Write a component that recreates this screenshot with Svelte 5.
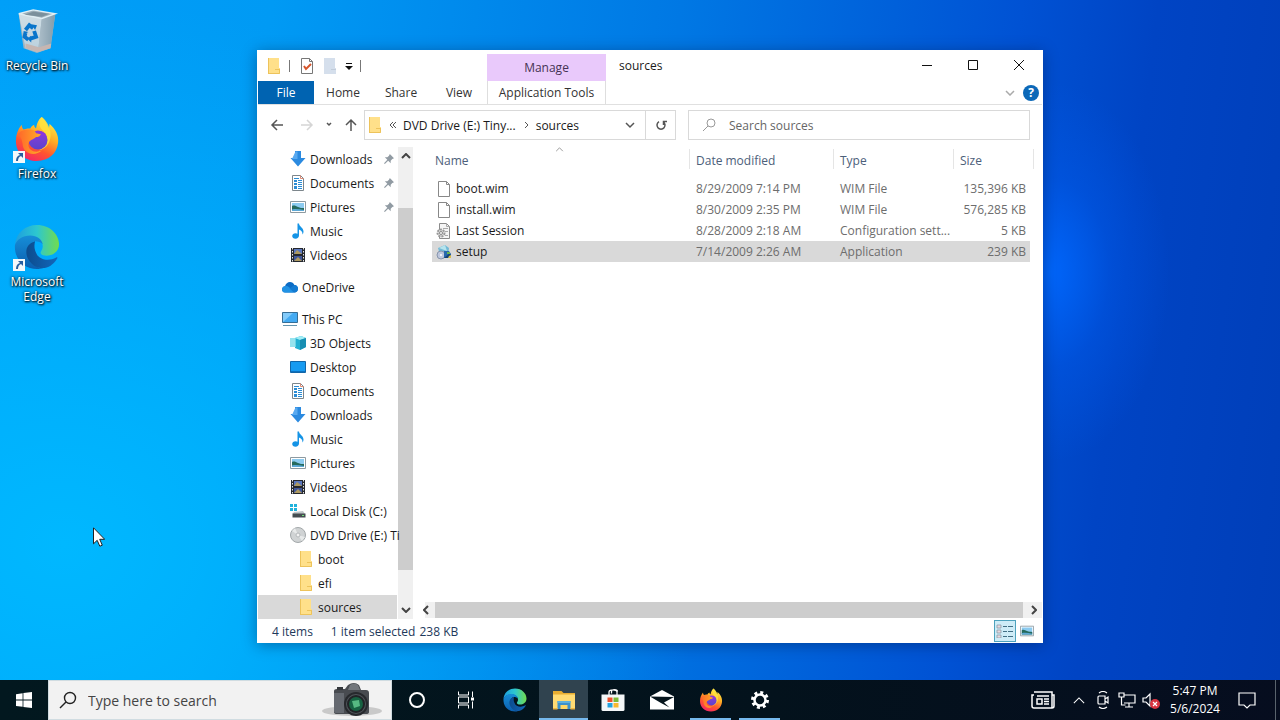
<script lang="ts">
	type Place = { name: string; icon: string; level: number; pinned?: boolean; gap?: boolean };

	const places: Place[] = [
		{ name: 'Downloads', icon: 'down', level: 2, pinned: true },
		{ name: 'Documents', icon: 'doc', level: 2, pinned: true },
		{ name: 'Pictures', icon: 'picture', level: 2, pinned: true },
		{ name: 'Music', icon: 'music', level: 2 },
		{ name: 'Videos', icon: 'video', level: 2 },
		{ name: 'OneDrive', icon: 'cloud', level: 1, gap: true },
		{ name: 'This PC', icon: 'pc', level: 1, gap: true },
		{ name: '3D Objects', icon: 'cube', level: 2 },
		{ name: 'Desktop', icon: 'desktop', level: 2 },
		{ name: 'Documents', icon: 'doc', level: 2 },
		{ name: 'Downloads', icon: 'down', level: 2 },
		{ name: 'Music', icon: 'music', level: 2 },
		{ name: 'Pictures', icon: 'picture', level: 2 },
		{ name: 'Videos', icon: 'video', level: 2 },
		{ name: 'Local Disk (C:)', icon: 'disk', level: 2 },
		{ name: 'DVD Drive (E:) Ti', icon: 'dvd', level: 2 },
		{ name: 'boot', icon: 'folder', level: 3 },
		{ name: 'efi', icon: 'folder', level: 3 },
		{ name: 'sources', icon: 'folder', level: 3 }
	];

	const files = [
		{ name: 'boot.wim', date: '8/29/2009 7:14 PM', type: 'WIM File', size: '135,396 KB', icon: 'file' },
		{ name: 'install.wim', date: '8/30/2009 2:35 PM', type: 'WIM File', size: '576,285 KB', icon: 'file' },
		{ name: 'Last Session', date: '8/28/2009 2:18 AM', type: 'Configuration sett...', size: '5 KB', icon: 'config' },
		{ name: 'setup', date: '7/14/2009 2:26 AM', type: 'Application', size: '239 KB', icon: 'setup' }
	];

	const shortcuts = [
		{ name: 'Recycle Bin', icon: 'bin', link: false },
		{ name: 'Firefox', icon: 'firefox', link: true },
		{ name: 'Microsoft Edge', icon: 'edge', link: true }
	];

	const apps = [
		{ name: 'Cortana', icon: 'cortana', state: '' },
		{ name: 'Task View', icon: 'taskview', state: '' },
		{ name: 'Microsoft Edge', icon: 'edge', state: '' },
		{ name: 'File Explorer', icon: 'explorer', state: 'active' },
		{ name: 'Microsoft Store', icon: 'store', state: '' },
		{ name: 'Mail', icon: 'mail', state: '' },
		{ name: 'Firefox', icon: 'firefox', state: 'running' },
		{ name: 'Settings', icon: 'settings', state: 'running' }
	];

	let current = $state('sources');
	let selected = $state('setup');
	let query = $state('');
	let search = $state('');
</script>

{#snippet small(icon: string)}
	<svg class="small" viewBox="0 0 16 16" aria-hidden="true">
		{#if icon === 'down'}
			<path d="M5 0h6v7h4.500L8 15.500.5 7H5z" fill="#2b8ae0" />
			<path d="M5.500.5h2V8H2z" fill="#58a9f0" />
		{:else if icon === 'doc'}
			<path d="M2.500.5h8l3 3v12h-11z" fill="#fff" stroke="#7d868c" />
			<path d="M10.500.5v3h3" fill="none" stroke="#d98b77" />
			<path d="M4 5h3v2H4zm0 3h3v2H4zm0 3h3v3H4zM4 3h5v1H4zM8 5h4v1H8zm0 2h4v1H8zm0 2h4v1H8zm0 2h4v1H8zm0 2h4v1H8z" fill="#2b8cd4" />
		{:else if icon === 'picture'}
			<path d="M.5 2.500h15v11H.5z" fill="#fff" stroke="#8d9aa1" />
			<path d="M2 4h12v8H2z" fill="#8ccbf0" />
			<path d="M2 7c2-1 4 0 6 1s4 1 6 1v3H2z" fill="#256a5d" />
			<path d="M2 10.500c4-1 8 0 12 .5v1H2z" fill="#5ca8d5" />
		{:else if icon === 'music'}
			<path d="M7.500.5H9c0 3 4.500 4 4.500 8 0 2-1 3-1 3 .2-3-1.500-4-3.500-5v6c0 2-1.500 3.200-3.500 3.200S2.200 14.500 2.200 13 3.700 10.300 5.500 10.300c.8 0 1.500.2 2 .5z" fill="#1594e6" />
		{:else if icon === 'video'}
			<path d="M1 1h14v14H1z" fill="#25282e" />
			<path d="M4 2h8v5H4z" fill="#5a77be" />
			<path d="M4 9h8v5H4z" fill="#405699" />
			<path d="m4 7 3-4 5 4zm0 7 4-4 4 4z" fill="#ad9960" />
			<path d="M2.500 1v14M13.500 1v14" stroke="#e6e6e6" stroke-dasharray="1.500 1.500" />
		{:else if icon === 'cloud'}
			<path d="M3.500 13.500C1.500 13.500 0 12.200 0 10.400 0 8.600 1.300 7.300 3 7.200 3.700 4.700 5.600 3 8 3c2 0 3.600 1 4.400 2.900C14.600 6 16 7.600 16 9.700c0 2.200-1.600 3.800-3.800 3.800z" fill="#0c6cc5" />
			<path d="M3 7.200c2.500-.5 4 .2 9 6.300H3.500A3.300 3.300 0 0 1 0 10.400a3.300 3.300 0 0 1 3-3.200z" fill="#2192e4" />
			<path d="M7.500 9.500 12.400 6C15 6 16 8 16 9.700c0 2.200-1.600 3.800-3.800 3.800z" fill="#137bd2" />
		{:else if icon === 'pc'}
			<path d="M.5 1.500h15v10H.5z" fill="#43aaf2" stroke="#356d95" />
			<path d="M1 2h10L1 11z" fill="#83cbfa" />
			<path d="M1 14.500h14" stroke="#6494ad" />
		{:else if icon === 'cube'}
			<path d="m5 3 6-2 5 2v9l-6 3-5-2z" fill="#22b0d2" />
			<path d="m5 3 6-2 5 2-6 2z" fill="#a2edf5" /><path d="m10 5 6-2v9l-6 3z" fill="#178eb2" />
			<path d="M0 3h6v9H0z" fill="#7adcea" opacity=".8" />
		{:else if icon === 'desktop'}
			<path d="M.5 2.500h15v11H.5z" fill="#179bf1" stroke="#1266a8" /><path d="M1 12.500h14" stroke="#0b71bf" />
		{:else if icon === 'disk'}
			<path d="M0 1h3v3H0zm4 0h3v3H4zM0 5h3v3H0zm4 0h3v3H4z" fill="#20b2dc" />
			<path d="m4 9 9-1 2 3H2.500z" fill="#bfc5c8" /><path d="M2.500 10.500h13v4h-13z" fill="#454d51" />
			<path d="M12 12.500h2" stroke="#72df77" />
		{:else if icon === 'dvd'}
			<circle cx="8" cy="8" r="7.500" fill="#d0d3d4" stroke="#a2a7a9" />
			<path d="m8 8-6-4 3-3zm0 0 7 2-3 4z" fill="#e8eaea" /><circle cx="8" cy="8" r="2" fill="#f3f3f3" stroke="#b5b9bb" />
		{:else if icon === 'folder'}
			<path d="M2 0h11v10h1v6H2z" fill="#ffe08a" />
			<path d="M2.500 0v16M9 11.500h5M13.500 11v4.500H3" stroke="#edc35b" fill="none" />
		{:else if icon === 'file'}
			<path d="M2.500.5h8l3 3v12h-11z" fill="#fff" stroke="#888" /><path d="M10.500.5v3h3" fill="none" stroke="#888" />
		{:else if icon === 'config'}
			<path d="M3.500.5h7l3 3v12h-10z" fill="#f5f5f5" stroke="#8b8b8b" /><path d="M10.500.5v3h3M7 5.500h5M9 8.500h3M9 12.500h3" fill="none" stroke="#aaa" />
			<circle cx="5" cy="10" r="3.500" fill="#ddd" stroke="#999" stroke-width="2" stroke-dasharray="2 1" /><circle cx="5" cy="10" r="1.500" fill="#fff" stroke="#888" />
		{:else if icon === 'setup'}
			<path d="M2 4 9 1l4 3-1 8-7 2z" fill="#72b9d6" /><path d="M3 4 9 1l2 6z" fill="#b6e4ed" />
			<circle cx="5" cy="11" r="4" fill="#bec7dd" stroke="#8795ac" /><circle cx="5" cy="11" r="1" fill="#fff" />
			<path d="M8 7h5l2 3v4H8z" fill="#2869ad" /><path d="m8 14 6-5 1 5z" fill="#164276" /><path d="M11 8h3v2h-3z" fill="#69b451" /><path d="m13 12 2-1v3h-3z" fill="#d8bd4c" />
		{/if}
	</svg>
{/snippet}

{#snippet large(icon: string)}
	<svg class="large" viewBox="0 0 48 48" aria-hidden="true">
		{#if icon === 'edge'}
			<path d="M1 22C2 9 12 1 24 1c14 0 23 10 23 20 0 8-7 12-13 12-5 0-7-2-6-4s2-3 2-6c0-6-6-10-13-10S3 17 1 22z" fill="url(#edge-top)" />
			<path d="M1 22c2-6 8-10 16-10 7 0 12 4 13 9-2-2-5-3-8-3-7 1-9 9-6 16s8 12 14 12c-2 1-4 1-6 1C11 47 0 37 1 22z" fill="url(#edge-left)" />
			<path d="M22 18c-8 2-11 9-8 17 3 7 10 12 18 11 6-1 11-6 13-10 1-1 0-2-1-1-7 4-18 3-21-5-2-4-2-8-1-12z" fill="url(#edge-low)" />
		{:else if icon === 'firefox'}
			<path d="M29 1c4 4 6 8 7 12 1-2 1-4 1-5 6 5 10 12 9 20-1 11-10 19-22 19C11 47 2 38 2 26 2 19 4 14 8 9c0 2 1 4 2 5 3-1 6-1 7-1 1-2 2-3 4-4 0 2 1 3 2 4 1-5 2-9 6-12z" fill="url(#fox-body)" />
			<path d="M29 1c6 5 8 10 9 16 1 9-3 17-12 19 9-5 10-15 5-20-3-3-7-6-2-15z" fill="#ffe43e" opacity=".8" />
			<circle cx="25" cy="25" r="10" fill="url(#fox-core)" />
			<path d="M4 19c3-4 7-5 13-5 3 0 5 1 6 4l5 1c0 2-3 3-5 3-3 3-8 3-8 8 0 6 7 9 14 6-8 7-20 3-20-7-1-4-1-7-5-10z" fill="url(#fox-head)" />
			<path d="M23 17c5-3 10 0 11 5-3-2-6-2-9 0l4-3z" fill="#8a38db" />
		{:else if icon === 'bin'}
			<path d="m5 7 38 0-5 35-14 5-14-5z" fill="#9eb5c1" />
			<path d="m5 6 24 5-4 35-13-4z" fill="url(#bin-face)" /><path d="m29 11 14-5-5 36-13 4z" fill="url(#bin-side)" />
			<path d="m5 6 15-4 23 4-14 5z" fill="#9caeb8" stroke="#e0eef4" stroke-width="1.500" />
			<path d="m11 7 9-3 17 2-8 3z" fill="#7b909c" />
			<path d="m12 37 14 4-1 5-13-4zm14 4 13-4-1 5-13 4z" fill="#c6b6b2" />
			<g fill="none" stroke="#0975cb" stroke-width="4"><path d="m12 23 4-5 4 3M21 24l2 6-6 2M15 33l-4-3 1-4" /></g>
			<path d="m18 17 6 1-2 5zm0 12v7l-4-4zm-8-5 5 1-5 3z" fill="#0975cb" />
		{:else if icon === 'cortana'}
			<circle cx="24" cy="24" r="14" fill="none" stroke="#fff" stroke-width="4" />
		{:else if icon === 'taskview'}
			<path d="M9 7v7h20V7M9 41v-7h20v7M9 18h20v12H9zM37 7v11M37 27v14" fill="none" stroke="#fff" stroke-width="2" /><path d="M34 19h6v6h-6z" fill="#fff" />
		{:else if icon === 'explorer'}
			<path d="M2 6h17l4 4h23v32H2z" fill="#e8ad31" /><path d="M2 13h44v29H2z" fill="#ffdb73" />
			<path d="M11 26h26v16H11z" fill="#3d91cb" /><path d="M17 34h14v8H17z" fill="#ffd765" /><path d="M11 26h26v4H11z" fill="#5eb1dd" /><path d="M2 40h9v3H2zm35 0h9v3h-9z" fill="#efb63f" />
		{:else if icon === 'store'}
			<path d="M16 15V8c0-6 16-6 16 0v7M21 11V7c0-5 12-5 12 0" fill="none" stroke="#fff" stroke-width="2.500" />
			<path d="M1 13h46v30q0 3-3 3H4q-3 0-3-3z" fill="#f4f7f8" />
			<path d="M13 19h10v9H13z" fill="#ef512d" /><path d="M25 19h10v9H25z" fill="#7cba38" /><path d="M13 30h10v9H13z" fill="#24a2df" /><path d="M25 30h10v9H25z" fill="#fab82f" />
		{:else if icon === 'mail'}
			<path d="M0 17 24 4l24 13v26H0z" fill="#fff" /><path d="m0 17 48 1-20 11 11 10-17-9z" fill="#06151d" />
		{:else if icon === 'settings'}
			<circle cx="24" cy="24" r="15" fill="none" stroke="#fff" stroke-width="6" stroke-dasharray="5.900 5.880" />
			<circle cx="24" cy="24" r="11" fill="none" stroke="#fff" stroke-width="5" />
		{/if}
	</svg>
{/snippet}

<svg class="defs" aria-hidden="true">
	<defs>
		<linearGradient id="edge-top"><stop stop-color="#1d9ee0" /><stop offset=".5" stop-color="#2dc7cf" /><stop offset="1" stop-color="#72dc4d" /></linearGradient>
		<linearGradient id="edge-left" x2="0" y2="1"><stop stop-color="#168ed8" /><stop offset="1" stop-color="#0b5eae" /></linearGradient>
		<linearGradient id="edge-low"><stop stop-color="#0c4c8e" /><stop offset="1" stop-color="#1267bb" /></linearGradient>
		<linearGradient id="fox-body" x1=".8" y1="0" x2=".3" y2="1"><stop stop-color="#fff44c" /><stop offset=".4" stop-color="#ffad25" /><stop offset=".7" stop-color="#ff552f" /><stop offset="1" stop-color="#f42568" /></linearGradient>
		<linearGradient id="fox-core" x2="0" y2="1"><stop stop-color="#8f3bd9" /><stop offset="1" stop-color="#5c43cc" /></linearGradient>
		<linearGradient id="fox-head"><stop stop-color="#ff672b" /><stop offset="1" stop-color="#ffae25" /></linearGradient>
		<linearGradient id="bin-face" x2="0" y2="1"><stop stop-color="#d1dee5" /><stop offset="1" stop-color="#b9d0dd" /></linearGradient>
		<linearGradient id="bin-side"><stop stop-color="#aebfca" /><stop offset="1" stop-color="#849dac" /></linearGradient>
	</defs>
</svg>

<div class="screen">
	<main class="desktop">
		<ul class="shortcuts">
			{#each shortcuts as item}
				<li>
					<button class="shortcut">
						<span class="picture">
							{@render large(item.icon)}
							{#if item.link}
								<svg class="arrow" viewBox="0 0 12 12" aria-hidden="true"><path d="M0 0h12v12H0z" fill="#f4f8fa" /><path d="M3 10q0-5 4-6L5 2h5v5L8 5q-3 1-3 5z" fill="#285fa0" /></svg>
							{/if}
						</span>
						<span>{item.name}</span>
					</button>
				</li>
			{/each}
		</ul>

		<section class="window" aria-label="sources">
			<header class="titlebar">
				<div class="quick">
					{@render small('folder')}
					<i></i>
					<button aria-label="Properties">
						<svg class="small" viewBox="0 0 16 16"><path d="M2.500.5h8l3 3v12h-11z" fill="#fff" stroke="#777" /><path d="M10.500.5v3h3" fill="none" stroke="#777" /><path d="m5 8 2 3 5-5" fill="none" stroke="#d6552b" stroke-width="2" /></svg>
					</button>
					<button aria-label="New folder">
						<svg class="small" viewBox="0 0 16 16"><path d="M2 0h11v10h1v6H2z" fill="#d5dfec" /><path d="M9 11.500h5" stroke="#c1ccda" /></svg>
					</button>
					<button aria-label="Customize Quick Access Toolbar">
						<svg class="tiny" viewBox="0 0 8 8"><path d="M1 1.500h6" stroke="#111" /><path d="M0 4h8L4 8z" fill="#111" /></svg>
					</button>
					<i></i>
				</div>
				<div class="manage">Manage</div>
				<h1>sources</h1>
				<div class="controls">
					<button aria-label="Minimize"><svg viewBox="0 0 10 10"><path d="M0 5.500h10" /></svg></button>
					<button aria-label="Maximize"><svg viewBox="0 0 10 10"><path d="M.5.5h9v9h-9z" /></svg></button>
					<button aria-label="Close"><svg viewBox="0 0 10 10"><path d="m0 0 10 10M10 0 0 10" /></svg></button>
				</div>
			</header>

			<nav class="ribbon" aria-label="Ribbon">
				<button class="file">File</button>
				<button>Home</button>
				<button>Share</button>
				<button>View</button>
				<button class="tools">Application Tools</button>
				<div class="help">
					<button aria-label="Expand the Ribbon"><svg viewBox="0 0 10 6"><path d="m1 1 4 4 4-4" fill="none" stroke="#aaa" stroke-width="1.500" /></svg></button>
					<button class="question" aria-label="Help">?</button>
				</div>
			</nav>

			<div class="address">
				<div class="history">
					<button aria-label="Back"><svg viewBox="0 0 14 14"><path d="M13 7H2M7 2 2 7l5 5" /></svg></button>
					<button aria-label="Forward" disabled><svg viewBox="0 0 14 14"><path d="M1 7h11M7 2l5 5-5 5" /></svg></button>
					<button class="recent" aria-label="Recent locations"><svg viewBox="0 0 8 14"><path d="m2 5 2 2 2-2" /></svg></button>
					<button aria-label="Up"><svg viewBox="0 0 14 14"><path d="M7 13V2M2 7l5-5 5 5" /></svg></button>
				</div>
				<div class="crumbs">
					{@render small('folder')}
					<svg class="chevrons" viewBox="0 0 8 8" aria-hidden="true"><path d="M4 1 1 4l3 3M7 1 4 4l3 3" /></svg>
					<a href="#drive">DVD Drive (E:) Tiny...</a>
					<svg class="chevrons" viewBox="0 0 8 8" aria-hidden="true"><path d="m3 1 3 3-3 3" /></svg>
					<a href="#sources">sources</a>
					<button class="previous" aria-label="Previous locations"><svg viewBox="0 0 10 8"><path d="m1 2 4 4 4-4" /></svg></button>
					<button class="refresh" aria-label="Refresh"><svg viewBox="0 0 12 12"><path d="M8 2.700A4 4 0 1 1 4 2.700M8.500 6V2.500H12" /></svg></button>
				</div>
				<label class="find">
					<svg viewBox="0 0 14 14" aria-hidden="true"><circle cx="9" cy="5" r="4" /><path d="m6 8-5 5" /></svg>
					<input type="text" placeholder="Search sources" aria-label="Search sources" bind:value={search} />
				</label>
			</div>

			<div class="body">
				<nav class="places" aria-label="Folders">
					{#each places as place}
						<button
							class="place level{place.level}"
							class:gap={place.gap}
							class:current={place.name === current}
							onclick={() => (current = place.name)}
						>
							{@render small(place.icon)}
							<span>{place.name}</span>
							{#if place.pinned}
								<svg class="pin" viewBox="0 0 12 12" aria-hidden="true"><path d="m7 0 5 5-2 1-2 2v3L5 8l-4 4-1-1 4-4-3-3h3l2-2z" fill="#919ba3" /></svg>
							{/if}
						</button>
					{/each}
				</nav>
				<div class="vscroll" aria-hidden="true">
					<svg viewBox="0 0 10 6"><path d="m1 5 4-4 4 4" /></svg>
					<div class="track"><div class="thumb"></div></div>
					<svg viewBox="0 0 10 6"><path d="m1 1 4 4 4-4" /></svg>
				</div>

				<div class="content">
					<table>
						<thead>
							<tr>
								<th class="name">Name<svg viewBox="0 0 10 6" aria-hidden="true"><path d="m1 5 4-4 4 4" /></svg></th>
								<th class="date">Date modified</th>
								<th class="type">Type</th>
								<th class="size">Size</th>
							</tr>
						</thead>
						<tbody>
							{#each files as file}
								<tr class:selected={file.name === selected} onclick={() => (selected = file.name)}>
									<td><span class="entry">{@render small(file.icon)}{file.name}</span></td>
									<td>{file.date}</td>
									<td>{file.type}</td>
									<td>{file.size}</td>
								</tr>
							{/each}
						</tbody>
					</table>
					<div class="hscroll" aria-hidden="true">
						<svg viewBox="0 0 6 10"><path d="M5 1 1 5l4 4" /></svg>
						<div class="thumb"></div>
						<svg viewBox="0 0 6 10"><path d="m1 1 4 4-4 4" /></svg>
					</div>
				</div>
			</div>

			<footer class="status">
				<span class="count">4 items</span>
				<span>1 item selected</span>
				<span>238 KB</span>
				<div class="views">
					<button class="on" aria-label="Details">
						<svg viewBox="0 0 18 14"><path d="M1 1h4v3H1zm0 5h4v3H1zm0 5h4v3H1z" fill="#e8d8df" stroke="#8296a0" stroke-width=".7" /><path d="M7 2.500h4m1 0h5M7 7.500h4m1 0h5M7 12.500h4m1 0h5" stroke="#416f84" /></svg>
					</button>
					<button aria-label="Large thumbnails">{@render small('picture')}</button>
				</div>
			</footer>
		</section>

		<svg class="pointer" viewBox="0 0 12 20" aria-hidden="true"><path d="M.5.800v16l3.700-3.500 2.600 5.900 2.500-1-2.600-5.900h5z" fill="#fff" stroke="#222" /></svg>
	</main>

	<footer class="taskbar">
		<button class="start" aria-label="Start">
			<svg viewBox="0 0 16 16"><path d="m0 2.200 6.600-1v6.400H0zm7.400-1.100L16 0v7.600H7.400zM0 8.400h6.600v6.400L0 13.900zm7.400 0H16V16l-8.600-1.100z" fill="#fff" /></svg>
		</button>
		<label class="search">
			<svg class="glass" viewBox="0 0 18 18" aria-hidden="true"><circle cx="11" cy="7" r="5.500" /><path d="m7 11-6 6" /></svg>
			<input type="text" placeholder="Type here to search" aria-label="Type here to search" bind:value={query} />
			<svg class="camera" viewBox="0 0 62 34" aria-hidden="true">
				<ellipse cx="31" cy="28" rx="30" ry="5" fill="#c9c9c9" />
				<path d="M13 8q0-2 3-2h8l3-4q6-4 11 0l2 5h5q3 0 3 3v19q0 2-3 2H16q-3 0-3-2z" fill="#484b50" />
				<path d="M13 10h10v20H16q-3 0-3-2z" fill="#656970" /><path d="M29 2q4-3 8 0l2 5H27z" fill="#73777c" /><path d="M16 4h6v3h-6z" fill="#35383c" />
				<circle cx="35" cy="21" r="12" fill="#27292d" /><circle cx="35" cy="21" r="10" fill="#50545a" /><circle cx="35" cy="21" r="9" fill="#202326" /><circle cx="35" cy="21" r="7" fill="#176242" /><path d="m31 18 7-1 1 6-6 2z" fill="#56b982" />
			</svg>
		</label>
		{#each apps as app}
			<button class="app {app.state}" aria-label={app.name}>{@render large(app.icon)}</button>
		{/each}
		<div class="tray">
			<button class="news" aria-label="News"><svg viewBox="0 0 24 18"><path d="M3 1h18v16H3q-2 0-2-2V4h2M21 4h2v11q0 2-2 2M6 5h12M6 8h5v5H6zM13 8h5M13 10.500h5M13 13h5" /></svg></button>
			<button aria-label="Show hidden icons"><svg class="up" viewBox="0 0 14 8"><path d="m1 7 6-6 6 6" /></svg></button>
			<button aria-label="Meet Now"><svg viewBox="0 0 18 18"><path d="M4 6q0-1 1-1h6v8H5q-1 0-1-1zM11 8l3-2v6l-3-2M5 2q4-3 8 0M5 16q4 3 8 0" /></svg></button>
			<button aria-label="Network"><svg viewBox="0 0 18 18"><path d="M6 4h11v8H6M11 12v4M7 16h8M1 2h5v4H1zM3.500 6v8h4" /></svg></button>
			<button aria-label="Volume"><svg viewBox="0 0 18 18"><path d="M1 7h3l4-4v12l-4-4H1z" /><circle cx="13" cy="13" r="5" class="muted" /><path d="m11 11 4 4m0-4-4 4" /></svg></button>
			<button class="clock"><time>5:47 PM</time><time>5/6/2024</time></button>
			<button class="notes" aria-label="Notifications"><svg viewBox="0 0 18 18"><path d="M1 2h16v12h-5l-3 3-3-3H1z" /></svg></button>
			<button class="peek" aria-label="Show desktop"></button>
		</div>
	</footer>
</div>

<style>
	:global(body) {
		margin: 0;
		overflow: hidden;
	}
	.defs {
		position: absolute;
		width: 0;
		height: 0;
	}
	.screen {
		height: 100vh;
		display: flex;
		flex-direction: column;
		font-family: 'Open Sans', 'Noto Sans', sans-serif;
		font-size: 12px;
		color: #1a1a1a;
	}
	button,
	input {
		font: inherit;
		color: inherit;
		background: none;
		border: 0;
		padding: 0;
		margin: 0;
	}
	button {
		display: flex;
		align-items: center;
		justify-content: center;
		white-space: nowrap;
	}
	svg {
		display: block;
		flex: none;
	}
	.small {
		width: 16px;
		height: 16px;
	}
	.large {
		width: 48px;
		height: 48px;
	}
	.desktop {
		position: relative;
		flex: 1;
		min-height: 0;
		background:
			radial-gradient(ellipse 120px 190px at 82% 40%, rgba(0, 104, 255, 0.9), rgba(0, 92, 240, 0.4) 50%, transparent),
			radial-gradient(ellipse 50% 80% at 5% 80%, #00b8ff, transparent),
			linear-gradient(97deg, #009ff8 0%, #009af4 20%, #0078e4 50%, #0052d4 75%, #0044c4 85%, #003eb8 100%);
	}
	.shortcuts {
		list-style: none;
		margin: 0;
		padding: 0;
		width: 74px;
	}
	.shortcuts li {
		height: 108px;
	}
	.shortcut {
		width: 100%;
		padding-top: 7px;
		flex-direction: column;
		gap: 3px;
		color: #fff;
		line-height: 15px;
		white-space: normal;
		text-shadow: 1px 1px 2px #000, 0 0 3px #000;
	}
	.picture {
		position: relative;
	}
	.shortcut .large {
		width: 46px;
	}
	.arrow {
		position: absolute;
		left: -1px;
		bottom: 0;
		width: 12px;
		height: 12px;
	}
	.pointer {
		position: absolute;
		left: 93px;
		top: 527px;
		width: 12px;
		height: 20px;
	}
	.window {
		position: absolute;
		inset: 50px 237px 37px 257px;
		display: flex;
		flex-direction: column;
		box-sizing: border-box;
		padding: 0 1px;
		background: #fff;
		box-shadow: 0 2px 14px rgba(0, 20, 60, 0.4);
	}
	.titlebar {
		display: flex;
		height: 31px;
	}
	.quick {
		width: 229px;
		box-sizing: border-box;
		padding-left: 8px;
		display: flex;
		align-items: center;
		gap: 7px;
	}
	.quick i {
		width: 1px;
		height: 12px;
		background: #777;
	}
	.quick i + button {
		margin-left: 2px;
	}
	.tiny {
		width: 8px;
		height: 8px;
	}
	.manage {
		width: 119px;
		margin-top: 4px;
		line-height: 27px;
		text-align: center;
		background: #e9c9fb;
		color: #453354;
	}
	h1 {
		flex: 1;
		margin: 0;
		padding-left: 13px;
		font-size: 12px;
		font-weight: 400;
		line-height: 31px;
	}
	.controls {
		display: flex;
	}
	.controls button {
		width: 46px;
		height: 30px;
	}
	.controls svg {
		width: 10px;
		height: 10px;
		fill: none;
		stroke: #111;
	}
	.ribbon {
		display: flex;
		height: 23px;
		border-bottom: 1px solid #e0e0e0;
		color: #333;
	}
	.ribbon > button {
		width: 58px;
	}
	.ribbon .file {
		width: 56px;
		background: #0063b1;
		color: #fff;
	}
	.ribbon .tools {
		width: 119px;
		box-sizing: border-box;
		border: solid #dedede;
		border-width: 0 1px;
		margin-left: -1px;
	}
	.help {
		margin-left: auto;
		display: flex;
		align-items: center;
		gap: 8px;
		padding-right: 3px;
	}
	.help svg {
		width: 10px;
		height: 6px;
	}
	.question {
		width: 16px;
		height: 16px;
		border-radius: 50%;
		background: #0c68b8;
		color: #fff;
		font-weight: 700;
	}
	.address {
		display: flex;
		align-items: center;
		height: 40px;
		gap: 12px;
		padding-right: 12px;
	}
	.history {
		display: flex;
		align-items: center;
		gap: 16px;
		padding-left: 12px;
		width: 82px;
		fill: none;
		stroke: #555;
		stroke-width: 1.5;
	}
	.history svg {
		width: 14px;
		height: 14px;
	}
	.history .recent {
		margin: 0 -5px;
	}
	.history .recent svg {
		width: 8px;
	}
	.history button:disabled {
		stroke: #d5d5d5;
	}
	.crumbs {
		flex: 308 1 0;
		box-sizing: border-box;
		display: flex;
		align-items: center;
		gap: 6px;
		height: 30px;
		padding-left: 2px;
		border: 1px solid #d9d9d9;
	}
	.crumbs a {
		color: inherit;
		text-decoration: none;
		white-space: nowrap;
	}
	.chevrons {
		width: 8px;
		height: 8px;
		fill: none;
		stroke: #555;
	}
	.previous,
	.refresh {
		height: 28px;
		width: 30px;
		fill: none;
		stroke: #555;
		stroke-width: 1.5;
	}
	.previous {
		margin-left: auto;
	}
	.previous svg {
		width: 10px;
		height: 8px;
	}
	.refresh {
		border-left: 1px solid #d9d9d9;
		margin-left: -6px;
	}
	.refresh svg {
		width: 12px;
		height: 12px;
	}
	.find {
		flex: 327 1 0;
		box-sizing: border-box;
		display: flex;
		align-items: center;
		gap: 13px;
		height: 30px;
		padding-left: 13px;
		border: 1px solid #d9d9d9;
	}
	.find svg {
		width: 14px;
		height: 14px;
		fill: none;
		stroke: #999;
	}
	.find input,
	.search input {
		flex: 1;
		min-width: 0;
		outline: none;
	}
	.find input::placeholder {
		color: #666;
	}
	.body {
		flex: 1;
		min-height: 0;
		display: flex;
		padding-top: 2px;
	}
	.places {
		position: relative;
		z-index: 1;
		width: 140px;
	}
	.place {
		width: 139px;
		box-sizing: border-box;
		height: 24px;
		justify-content: flex-start;
		gap: 4px;
	}
	.place.gap {
		margin-top: 8px;
	}
	.level1 {
		padding-left: 24px;
	}
	.level2 {
		padding-left: 32px;
	}
	.level3 {
		padding-left: 40px;
	}
	.current {
		background: #d9d9d9;
	}
	.pin {
		width: 10px;
		height: 10px;
		margin-left: auto;
		margin-right: 3px;
	}
	.vscroll {
		width: 15px;
		display: flex;
		flex-direction: column;
		align-items: center;
		background: #f0f0f0;
		fill: none;
		stroke: #444;
		stroke-width: 2;
	}
	.vscroll svg {
		width: 10px;
		height: 6px;
		margin: 6px 0;
	}
	.track {
		flex: 1;
		width: 100%;
	}
	.vscroll .thumb {
		height: 83%;
		margin-top: 43px;
		background: #cdcdcd;
	}
	.content {
		flex: 1;
		min-width: 0;
		display: flex;
		flex-direction: column;
		justify-content: space-between;
		padding-left: 12px;
	}
	table {
		margin: 0 12px 0 7px;
		border-collapse: collapse;
		table-layout: fixed;
	}
	th {
		position: relative;
		height: 26px;
		padding: 0 0 5px 6px;
		text-align: left;
		font-weight: 400;
		color: #4c607a;
	}
	th::after {
		content: '';
		position: absolute;
		right: 0;
		top: 2px;
		width: 1px;
		height: 20px;
		background: #e5e5e5;
	}
	th.size::after {
		right: -4px;
	}
	th.name {
		padding-left: 3px;
	}
	th.name svg {
		position: absolute;
		left: 50%;
		top: 0;
		width: 9px;
		height: 5px;
		margin-left: -6px;
		fill: none;
		stroke: #888;
	}
	.date {
		width: 138px;
	}
	.type {
		width: 114px;
	}
	.size {
		width: 70px;
	}
	td {
		height: 21px;
		padding: 0 0 0 6px;
		color: #6d6d6d;
		white-space: nowrap;
	}
	td:first-child {
		padding-left: 4px;
		color: #1a1a1a;
	}
	td:last-child {
		padding: 0 4px 0 0;
		text-align: right;
	}
	.entry {
		display: flex;
		align-items: center;
		gap: 4px;
	}
	.selected {
		background: #d9d9d9;
	}
	.hscroll {
		display: flex;
		align-items: center;
		height: 16px;
		padding-right: 5px;
		margin-bottom: 1px;
		background: #f0f0f0;
		fill: none;
		stroke: #444;
		stroke-width: 2;
	}
	.hscroll svg {
		width: 6px;
		height: 10px;
		margin-left: -2px;
	}
	.hscroll .thumb {
		flex: 1;
		height: 100%;
		margin: 0 10px 0 6px;
		background: #cdcdcd;
	}
	.status {
		height: 24px;
		display: flex;
		align-items: center;
		gap: 4px;
		padding-left: 14px;
		color: #1e395b;
	}
	.count {
		margin-right: 14px;
	}
	.views {
		display: flex;
		margin-left: auto;
		padding-right: 4px;
	}
	.views button {
		width: 22px;
		height: 22px;
		box-sizing: border-box;
	}
	.views .on {
		border: 1px solid #4da2bd;
		background: #ceecf7;
	}
	.views .on svg {
		width: 18px;
		height: 14px;
	}
	.views .small {
		width: 14px;
		height: 14px;
	}
	.taskbar {
		display: flex;
		height: 40px;
		background: linear-gradient(90deg, #02181f, #03121c 60%, #060d1f);
		color: #fff;
	}
	.start {
		width: 48px;
	}
	.start svg {
		width: 16px;
		height: 16px;
	}
	.search {
		width: 344px;
		box-sizing: border-box;
		padding: 0 8px 0 10px;
		display: flex;
		align-items: center;
		gap: 11px;
		background: #f2f2f2;
		border: 1px solid #d0dce1;
		color: #333;
		font-size: 14px;
	}
	.search input::placeholder {
		color: #444;
	}
	.glass {
		width: 18px;
		height: 18px;
		fill: none;
		stroke: #222;
		stroke-width: 1.4;
	}
	.camera {
		width: 62px;
		height: 34px;
	}
	.app {
		width: 49px;
	}
	.app .large {
		width: 24px;
		height: 24px;
	}
	.active {
		background: #30434f;
	}
	.active,
	.running {
		box-shadow: inset 0 -2px #76b9ed;
	}
	.running {
		width: 41px;
		margin: 0 4px;
	}
	.tray {
		margin-left: auto;
		display: flex;
	}
	.tray button {
		width: 24px;
	}
	.tray svg {
		width: 18px;
		height: 18px;
		fill: none;
		stroke: #fff;
		stroke-width: 1.2;
	}
	.tray .muted {
		fill: #d83440;
		stroke: none;
	}
	.tray .up {
		width: 12px;
		height: 7px;
	}
	.tray .news {
		width: 48px;
	}
	.tray .news svg {
		width: 24px;
		stroke-width: 1.5;
	}
	.tray .clock {
		width: 64px;
		flex-direction: column;
		line-height: 18px;
	}
	.tray .notes {
		width: 40px;
	}
	.tray .peek {
		width: 5px;
		margin-left: 8px;
		border-left: 1px solid #59636d;
	}
</style>
